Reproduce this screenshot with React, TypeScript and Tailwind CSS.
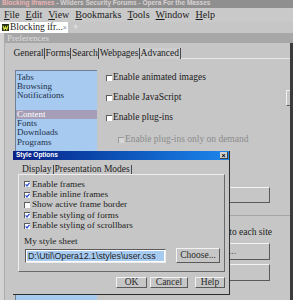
import React from 'react';

const menu = ['File', 'Edit', 'View', 'Bookmarks', 'Tools', 'Window', 'Help'];
const prefTabs = ['General', 'Forms', 'Search', 'Webpages', 'Advanced'];
const sections = ['Tabs', 'Browsing', 'Notifications', '', 'Content', 'Fonts', 'Downloads', 'Programs'];
const displayOpts = [
  { label: 'Enable frames', checked: true },
  { label: 'Enable inline frames', checked: true },
  { label: 'Show active frame border', checked: false },
  { label: 'Enable styling of forms', checked: true },
  { label: 'Enable styling of scrollbars', checked: true },
];

function Box({ checked, disabled }: { checked?: boolean; disabled?: boolean }) {
  return (
    <span
      className={`relative inline-block w-[6px] h-[6px] shrink-0 border-t border-l ${
        disabled ? 'border-[#9a9a9a] bg-[#d6d6d6]' : 'border-[#5c5c5c] bg-white'
      }`}
    >
      {checked && (
        <svg className="absolute left-0 top-0" width="5" height="5" viewBox="0 0 5 5">
          <path d="M0.6 2.4 L2 3.9 L4.5 0.8" stroke="#2d4fd6" strokeWidth="1.3" fill="none" />
        </svg>
      )}
    </span>
  );
}

function Btn({ className = '', children }: { className?: string; children?: React.ReactNode }) {
  return (
    <div
      className={`flex items-center border border-t-[#f2f2f2] border-l-[#f2f2f2] border-r-[#5a5a5a] border-b-[#5a5a5a] bg-[#c6c6c6] text-[9.5px] leading-none text-[#2a2a2a] whitespace-nowrap ${className}`}
    >
      {children}
    </div>
  );
}

function StyleOptions() {
  return (
    <div className="absolute left-[13px] top-[151px] w-[217px] h-[144px] bg-[#c6c6c6] border-r border-b border-[#2e2e2e] flex flex-col">
      {/* Title bar */}
      <div className="h-[9px] shrink-0 bg-linear-to-r from-[#0b1f86] to-[#1d86ec] flex items-center pl-[3px]">
        <span className="font-['Liberation_Sans',sans-serif] text-[6.5px] font-bold leading-none text-white">
          Style Options
        </span>
        <span className="ml-auto mr-[1px] w-[8px] h-[7px] bg-[#d2d2d2] border-r border-b border-[#404040] flex items-center justify-center font-['Liberation_Sans',sans-serif] text-[7px] font-bold leading-none text-black">
          ×
        </span>
      </div>

      {/* Tabs */}
      <div className="mt-[5px] ml-[9px] h-[9px] flex text-[9.5px] leading-[9px]">
        <span className="border-r border-[#4a4a4a] pr-[1px]">Display</span>
        <span className="border-r border-[#4a4a4a] pl-[1px] pr-[1px]">Presentation Modes</span>
      </div>

      {/* Panel */}
      <div className="ml-[5px] w-[207px] h-[98px] shrink-0 border-t border-l border-t-[#eeeeee] border-l-[#eeeeee] border-r border-b border-r-[#6a6a6a] border-b-[#6a6a6a] pt-[4px] pl-[5px] text-[9.2px]">
        {displayOpts.map((o) => (
          <div key={o.label} className="h-[10.4px] flex items-center gap-[2px] leading-none">
            <Box checked={o.checked} />
            <span>{o.label}</span>
          </div>
        ))}
        <div className="mt-[5px] h-[10px] leading-[10px]">My style sheet</div>
        <div className="mt-[3px] h-[14px] flex items-center">
          <div className="ml-[1px] w-[141px] h-[14px] shrink-0 border-t border-l border-t-[#5a5a5a] border-l-[#5a5a5a] border-r border-b border-r-[#eeeeee] border-b-[#eeeeee] bg-white p-[1px] overflow-hidden">
            <div className="h-[10px] bg-[#a6caf0] pl-[1px] font-['Liberation_Sans',sans-serif] text-[8.8px] leading-[10px] text-[#1e1e1e] whitespace-nowrap">
              D:\Util\Opera12.1\styles\user.css
            </div>
          </div>
          <Btn className="ml-[10px] w-[44px] h-[15px] justify-center">Choose...</Btn>
        </div>
      </div>

      {/* Buttons */}
      <div className="mt-[5px] ml-[103px] flex">
        <Btn className="w-[31px] h-[11px] justify-center">OK</Btn>
        <Btn className="ml-[3px] w-[38px] h-[11px] justify-center">Cancel</Btn>
        <Btn className="ml-[7px] w-[30px] h-[11px] justify-center">Help</Btn>
      </div>
    </div>
  );
}

export default function App() {
  return (
    <div className="relative w-[293px] h-[300px] overflow-hidden bg-[#c6c6c6] font-['Liberation_Serif',serif] text-[#1c1c1c]">
      {/* Window title */}
      <div className="h-[8px] overflow-hidden bg-[#8f8f8f] pl-[2px] font-['Liberation_Sans',sans-serif] text-[6.5px] font-bold whitespace-nowrap">
        <div className="-mt-[1px] leading-[8px]">
          <span className="text-[#eab4b4]">Blocking iframes</span>
          <span className="text-[#d8d2d2]"> - Wilders Security Forums - Opera For the Masses</span>
        </div>
      </div>

      {/* Menu bar */}
      <div className="h-[14px] flex items-center gap-[6px] pl-[4px] bg-[#c9c9c9] text-[10px] leading-none">
        {menu.map((m) => (
          <span key={m}>
            <span className="underline underline-offset-1">{m[0]}</span>
            {m.slice(1)}
          </span>
        ))}
      </div>

      {/* Tab bar */}
      <div className="h-[11px] flex items-stretch">
        <div className="w-[68px] bg-white flex items-center pl-[2px] text-[9.5px] leading-none">
          <svg width="7" height="7" viewBox="0 0 7 7" className="shrink-0">
            <rect width="7" height="7" fill="#1f2a18" />
            <path d="M1 1.6 L2.2 5.6 L3.5 2.8 L4.8 5.6 L6 1.6" stroke="#d6e03c" strokeWidth="1.1" fill="none" />
          </svg>
          <span className="ml-[1px] whitespace-nowrap">Blocking ifr...</span>
          <span className="ml-auto mr-[2px] font-['Liberation_Sans',sans-serif] text-[7px] text-[#8a8a8a]">×</span>
        </div>
        <span className="ml-[5px] self-center font-['Liberation_Sans',sans-serif] text-[9px] leading-none text-[#ececec]">+</span>
      </div>

      {/* Preferences window */}
      <div className="flex h-[267px]">
        <div className="w-[5px] bg-[#d3d3d3] border-r border-[#ababab]" />
        <div className="flex-1 flex flex-col min-w-0">
          <div className="h-[10px] bg-[#a7a7a7] pl-[2px] text-[9px] leading-[10px] text-[#dedede]">Preferences</div>
          <div className="flex-1 flex min-h-0">
            <div className="flex-1 min-w-0 overflow-hidden">
              {/* Tabs */}
              <div className="mt-[5px] ml-[8px] h-[11px] flex text-[9.5px] leading-[11px]">
                {prefTabs.map((t) => (
                  <span
                    key={t}
                    className={`border-r border-[#4a4a4a] px-[0.5px] ${t === 'Advanced' ? 'bg-[#cdcdcd]' : ''}`}
                  >
                    {t}
                  </span>
                ))}
                <div className="flex-1 border-b border-[#e8e8e8]" />
              </div>

              <div className="flex items-start">
                {/* Section list */}
                <div className="ml-[10px] mt-[11px] w-[82px] h-[240px] shrink-0 bg-[#a6caf0] border-t border-l border-[#6f7f96] pt-[1.5px] text-[9px] leading-[9.3px] text-[#22304a]">
                  {sections.map((s, i) => (
                    <div
                      key={i}
                      className={`h-[9.3px] pl-[1px] ${s === 'Content' ? 'bg-[#a69eb6] text-white' : ''}`}
                    >
                      {s}
                    </div>
                  ))}
                </div>

                {/* Options */}
                <div className="ml-[9px] mt-[9px] flex-1 min-w-0 flex flex-col text-[9.5px]">
                  <div className="h-[20px] flex items-center gap-[1px] leading-none">
                    <Box />
                    <span>Enable animated images</span>
                  </div>
                  <div className="h-[20px] flex items-center leading-none">
                    <Box />
                    <span className="ml-[1px]">Enable JavaScript</span>
                    <Btn className="ml-auto -mr-[56px] w-[60px] h-[16px]" />
                  </div>
                  <div className="h-[20px] flex items-center gap-[1px] leading-none">
                    <Box />
                    <span>Enable plug-ins</span>
                  </div>
                  <div className="mt-[2px] h-[20px] pl-[12px] flex items-center gap-[1px] leading-none text-[#8c8c8c]">
                    <Box disabled />
                    <span>Enable plug-ins only on demand</span>
                  </div>
                  <Btn className="mt-[37px] self-end mr-[20px] w-[150px] h-[16px]" />
                  <div className="mt-[12px] h-px bg-[#a4a4a4]" />
                  <div className="mt-[10px] h-[12px] leading-[12px] self-end mr-[18px] whitespace-nowrap">to each site</div>
                  <Btn className="mt-[5px] self-end mr-[20px] w-[170px] h-[17px] justify-end pr-[33px] text-[#5a5a5a]">...</Btn>
                  <Btn className="mt-[4px] self-end mr-[20px] w-[164px] h-[17px]" />
                </div>
              </div>
            </div>
            <div className="w-[3px] bg-[#3b3b3b]" />
          </div>
        </div>
      </div>

      <StyleOptions />
    </div>
  );
}
